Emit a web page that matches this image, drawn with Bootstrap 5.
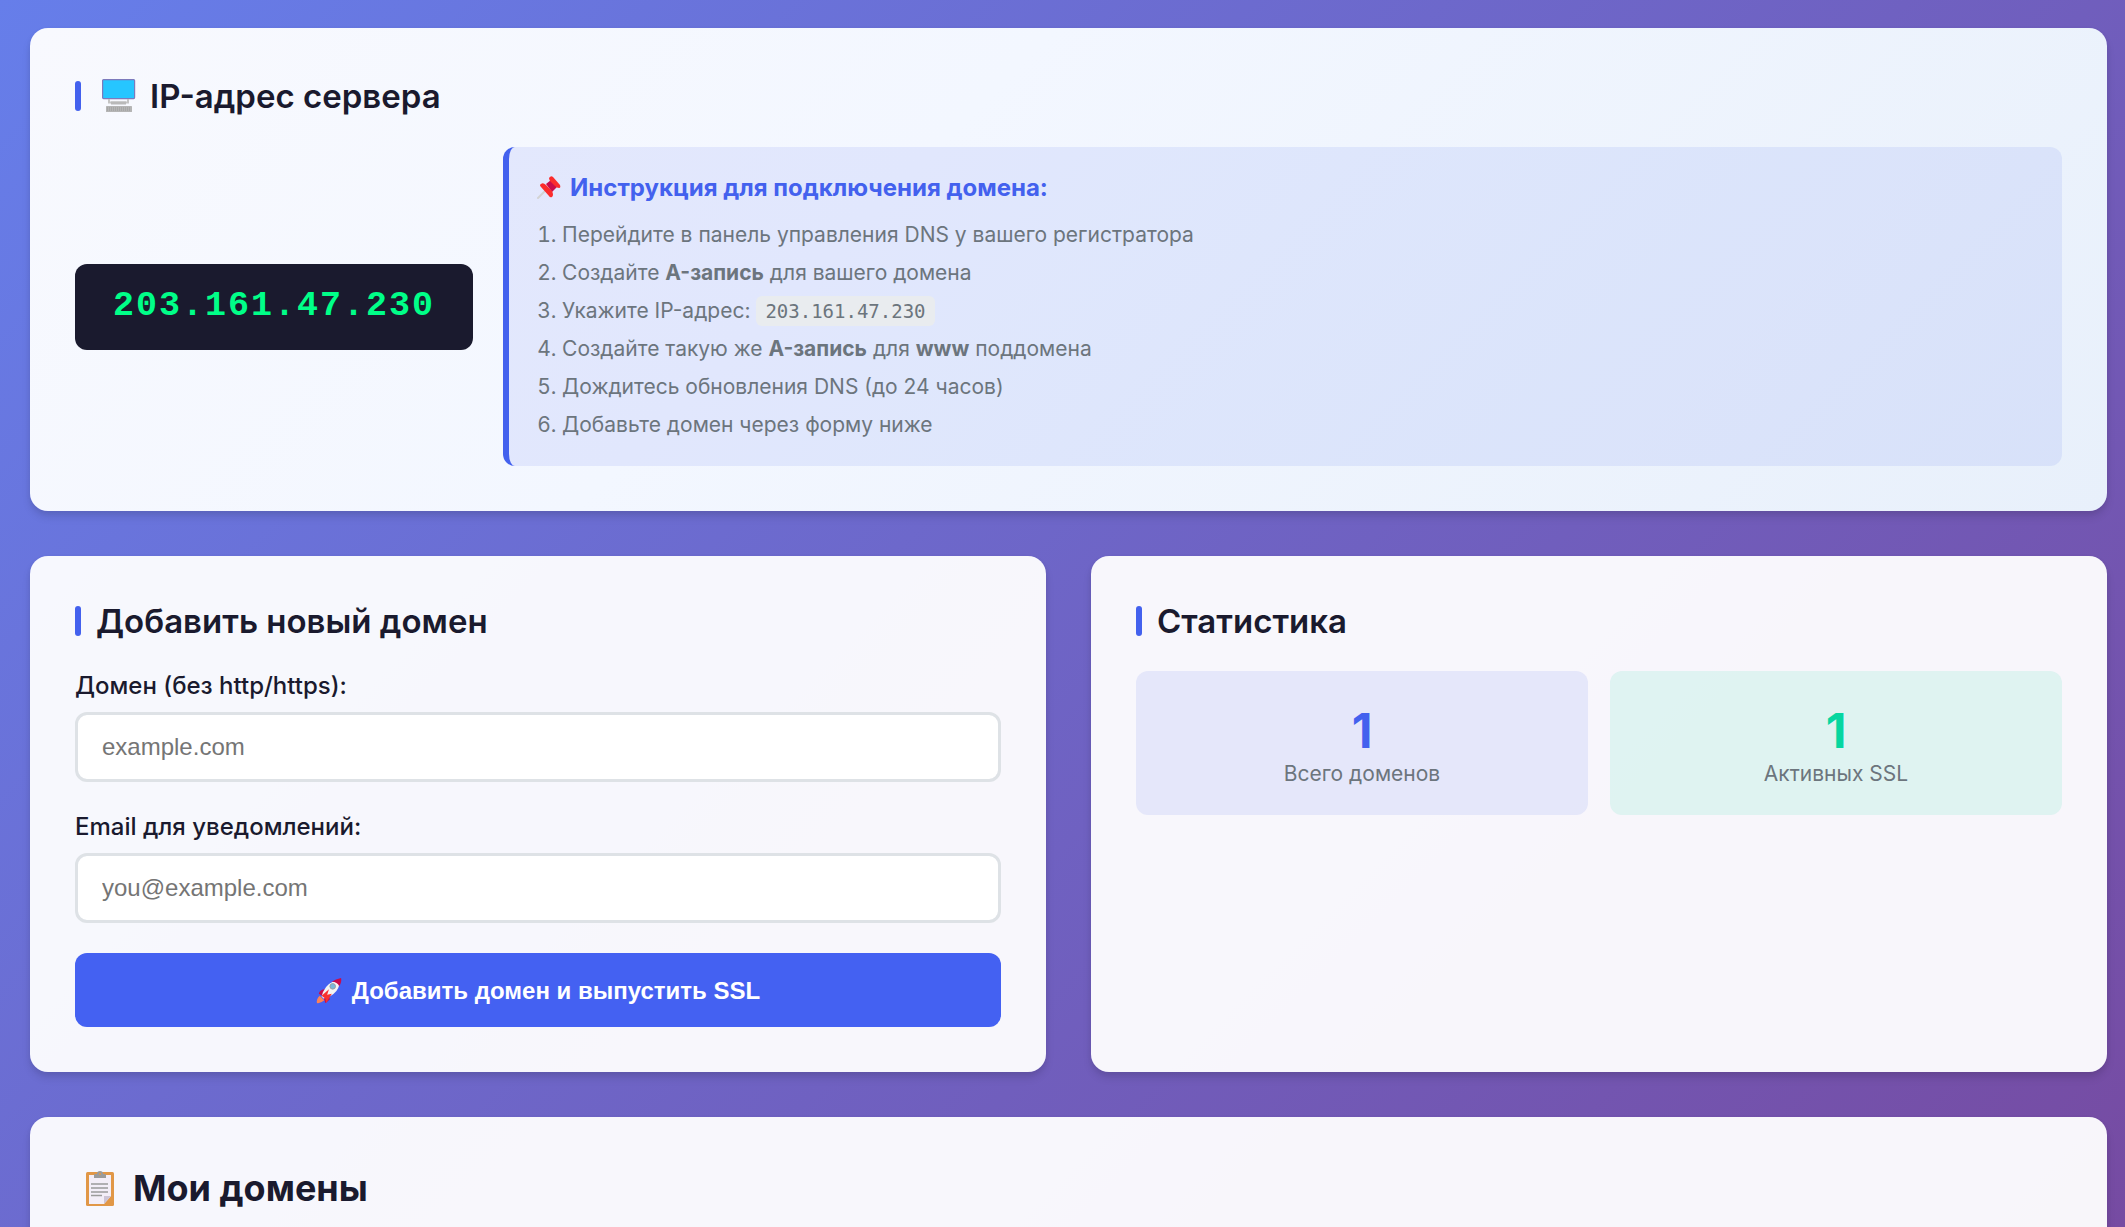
<!DOCTYPE html>
<html lang="ru">
<head>
<meta charset="utf-8">
<meta name="viewport" content="width=device-width, initial-scale=1">
<title>Мои домены</title>
<link href="https://cdn.jsdelivr.net/npm/bootstrap@5.3.0/dist/css/bootstrap.min.css" rel="stylesheet">
<style>
:root { --ink: #1a1a2e; --accent: #4361ee; --muted: #6c757d; }
body {
  font-family: Inter, sans-serif;
  color: var(--ink);
  font-size: 24px;
  background: linear-gradient(135deg, #667eea 0%, #764ba2 100%);
  min-height: 100vh;
}
.page-wrap { padding: 28px 18px 0 30px; gap: 45px; height: 100vh; overflow: hidden; }
.panel {
  flex-shrink: 0;
  padding: 45px;
  border-radius: 18px;
  background: rgba(255, 255, 255, .95);
  box-shadow: 0 6px 9px rgba(0, 0, 0, .1), 0 2px 5px rgba(0, 0, 0, .06);
}
.panel-server { background: linear-gradient(135deg, #f8f9fe 0%, #f3f7ff 40%, #e8f0fb 100%); }
.panel-title { font-size: 33px; font-weight: 600; line-height: 40px; margin: 0 0 30px; gap: 15px; }
.panel-title::before { content: ""; width: 6px; height: 30px; border-radius: 3px; background: var(--accent); }
.server-title { line-height: 46px; margin-bottom: 28px; gap: 21px; }
.server-title svg { width: 34px; height: 34px; }
.server-title span { margin-left: -7px; }
.server-row { gap: 30px; }
.panels-row { gap: 45px; }
.ip-box {
  font-family: "Liberation Mono", monospace;
  font-size: 35px; font-weight: 700; letter-spacing: 2px; line-height: 40px;
  color: #00ff88; background: var(--ink);
  padding: 22px 38px 24px; border-radius: 12px;
}
.guide { background: rgba(67, 97, 238, .1); border-left: 6px solid var(--accent); border-radius: 12px; padding: 23px 28px 22px; }
.guide-title { font-size: 24px; font-weight: 700; line-height: 36px; color: var(--accent); margin: 0 0 10px; gap: 9px; }
.guide-title svg { width: 24px; height: 24px; }
.guide-list { font-size: 21px; line-height: 38px; color: var(--muted); padding-left: 25px; margin: 0; }
.guide-list code { font-family: "DejaVu Sans Mono", monospace; font-size: 19px; line-height: 20px; color: inherit; background: #e9ecef; border-radius: 6px; padding: 4px 9px; }
.field-group { margin-bottom: 30px; }
.field-label { font-weight: 500; line-height: 29px; margin-bottom: 12px; }
.field-box { height: 70px; border: 3px solid #dee2e6; border-radius: 12px; padding: 0 24px; font-family: "Liberation Sans", sans-serif; font-size: 24px; }
.field-box::placeholder { color: #757575; }
.submit-btn { height: 74px; border: 0; border-radius: 12px; background: #4461f2; color: #fff; font-family: "Liberation Sans", sans-serif; font-size: 24px; font-weight: 700; padding: 8px 12px 6px; gap: 10px; }
.submit-btn:hover { background: #3550d8; color: #fff; }
.submit-btn svg { width: 26px; height: 26px; }
.stat { border-radius: 12px; padding: 36px 22px 23px; }
.stat-all { background: rgba(67, 97, 238, .1); }
.stat-ssl { background: rgba(6, 214, 160, .1); }
.stat-num { font-size: 48px; font-weight: 700; line-height: 48px; color: var(--accent); }
.stat-ssl .stat-num { color: #06d6a0; }
.stat-text { font-size: 21px; line-height: 37px; color: var(--muted); }
.stat-row { gap: 22px; }
.list-title { font-size: 36px; font-weight: 700; line-height: 52px; gap: 14px; margin: 0; padding-left: 6px; }
.list-title svg { width: 38px; height: 38px; }
</style>
</head>
<body>
<main class="page-wrap d-flex flex-column">
  <section class="panel panel-server">
    <h2 class="panel-title server-title d-flex align-items-center">
      <svg viewBox="0 0 34 34" aria-hidden="true"><rect x=".6" y=".6" width="32" height="19" rx="1" fill="#26c6ff" stroke="#7d7abc" stroke-width="1.200"/><path d="M7 20v3.500h19V20" fill="none" stroke="#c4c4c4" stroke-width="2"/><rect x="9" y="22.500" width="15" height="3" fill="#b9b9b9"/><rect x="4" y="27" width="26" height="6" rx=".6" fill="#b5b5b5"/><path d="M5 29h24M5 31h24" stroke="#999" stroke-dasharray="1 1"/></svg>
      <span>IP-адрес сервера</span>
    </h2>
    <div class="server-row d-flex align-items-center">
      <div class="ip-box">203.161.47.230</div>
      <div class="guide flex-grow-1">
        <h3 class="guide-title d-flex align-items-center">
          <svg viewBox="0 0 24 24" aria-hidden="true"><path d="M9 14 1 22" stroke="#d3d3d3" stroke-width="2" stroke-linecap="round"/><path d="m9 8 5-4 6 7-5 5z" fill="#ca0b4a"/><path d="M12 2q2-3 4-1l7 8q1 3-1 3-2 0-4-2l-5-5q-1-2-1-3zM4 8q2-2 5 1l6 6q2 4 0 6-2 1-3-1l-8-9q-2-2 0-3z" fill="#fb2c2c"/></svg>
          <span>Инструкция для подключения домена:</span>
        </h3>
        <ol class="guide-list">
          <li>Перейдите в панель управления DNS у вашего регистратора</li>
          <li>Создайте <strong>A-запись</strong> для вашего домена</li>
          <li>Укажите IP-адрес: <code>203.161.47.230</code></li>
          <li>Создайте такую же <strong>A-запись</strong> для <strong>www</strong> поддомена</li>
          <li>Дождитесь обновления DNS (до 24 часов)</li>
          <li>Добавьте домен через форму ниже</li>
        </ol>
      </div>
    </div>
  </section>

  <div class="panels-row row gx-0 flex-nowrap flex-shrink-0">
    <section class="panel col">
      <h2 class="panel-title d-flex align-items-center">Добавить новый домен</h2>
      <form>
        <div class="field-group">
          <label class="field-label d-block" for="domain">Домен (без http/https):</label>
          <input class="form-control field-box" id="domain" type="text" placeholder="example.com">
        </div>
        <div class="field-group">
          <label class="field-label d-block" for="email">Email для уведомлений:</label>
          <input class="form-control field-box" id="email" type="email" placeholder="you@example.com">
        </div>
        <button class="btn submit-btn w-100 d-flex align-items-center justify-content-center" type="submit">
          <svg viewBox="0 0 28 28" aria-hidden="true"><path d="M3 17q1-5 7-5l5 11q-3 3-5 4l-2-7z" fill="#ca0b4a"/><path d="M9 24q-5 4-8 3-1-4 3-8z" fill="#ff8257"/><path d="M6 20Q9 8 18 4l8-3q1 5-4 13-6 7-14 8z" fill="#f4f4f4"/><path d="M17 4q4-3 10-4 1 4-2 9-2-5-8-5z" fill="#ca0b4a"/><circle cx="18" cy="9" r="3" fill="#7ab8dc" stroke="#9b9b9b"/><path d="m6 19 8-7-2 6 5-1-6 10-1-5z" fill="#f8312f"/></svg>
          <span>Добавить домен и выпустить SSL</span>
        </button>
      </form>
    </section>
    <section class="panel col">
      <h2 class="panel-title d-flex align-items-center">Статистика</h2>
      <div class="stat-row d-flex text-center">
        <div class="stat stat-all flex-fill w-50"><div class="stat-num">1</div><div class="stat-text">Всего доменов</div></div>
        <div class="stat stat-ssl flex-fill w-50"><div class="stat-num">1</div><div class="stat-text">Активных SSL</div></div>
      </div>
    </section>
  </div>

  <section class="panel">
    <h2 class="list-title d-flex align-items-center">
      <svg viewBox="0 0 38 38" aria-hidden="true"><rect x="5" y="3" width="28" height="34" rx="1.500" fill="#e19747"/><path d="M8 6h22v21l-7 8H8z" fill="#f3eef8"/><path d="M23 35v-8h7z" fill="#cdc4d6"/><path d="M13 9V6q0-1 1-1h2q0-3 3-3t3 3h2q1 0 1 1v3z" fill="#9b9b9b"/><circle cx="19" cy="5" r="1" fill="#e19747"/><path d="M10 15h17M10 19h17M10 23h17M10 26.500h11" stroke="#9b9b9b" stroke-width="1.500"/></svg>
      <span>Мои домены</span>
    </h2>
  </section>
</main>
<script src="https://cdn.jsdelivr.net/npm/bootstrap@5.3.0/dist/js/bootstrap.bundle.min.js"></script>
</body>
</html>
